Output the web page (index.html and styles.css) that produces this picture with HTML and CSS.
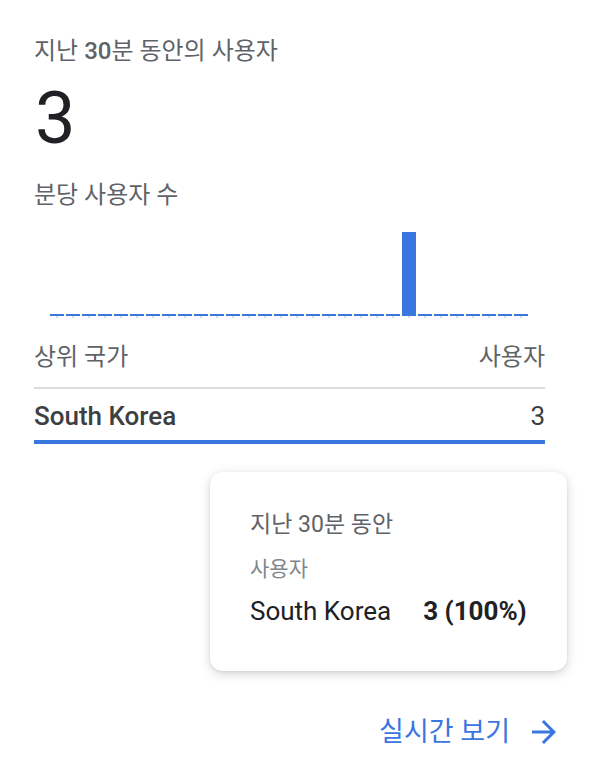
FILE: index.html
```html
<!DOCTYPE html>
<html lang="ko">
<head>
<meta charset="utf-8">
<link rel="stylesheet" href="styles.css">
</head>
<body>
<div class="card">
  <div class="title">지난 <span class="med">30</span>분 동안의 사용자</div>
  <div class="big">3</div>
  <div class="subtitle">분당 사용자 수</div>
  <div class="chart">
    <div class="bar"></div><div class="bar"></div><div class="bar"></div><div class="bar"></div><div class="bar"></div>
    <div class="bar"></div><div class="bar"></div><div class="bar"></div><div class="bar"></div><div class="bar"></div>
    <div class="bar"></div><div class="bar"></div><div class="bar"></div><div class="bar"></div><div class="bar"></div>
    <div class="bar"></div><div class="bar"></div><div class="bar"></div><div class="bar"></div><div class="bar"></div>
    <div class="bar"></div><div class="bar"></div><div class="bar tall"></div><div class="bar"></div><div class="bar"></div>
    <div class="bar"></div><div class="bar"></div><div class="bar"></div><div class="bar"></div><div class="bar"></div>
  </div>
  <div class="thead">
    <span>상위 국가</span>
    <span>사용자</span>
  </div>
  <div class="trow">
    <span>South Korea</span>
    <span class="num">3</span>
  </div>
  <div class="footer">
    <a class="link" href="#">실시간 보기
      <svg class="arrow" width="36" height="36" viewBox="0 0 24 24"><path d="M12 4l-1.41 1.41L16.17 11H4v2h12.17l-5.58 5.59L12 20l8-8z" fill="currentColor"/></svg>
    </a>
  </div>
  <div class="tooltip">
    <div class="tt-title">지난 30분 동안</div>
    <div class="tt-label">사용자</div>
    <div class="tt-row"><span>South Korea</span><span class="tt-val">3 (100%)</span></div>
  </div>
</div>
</body>
</html>
```

FILE: styles.css
```css
html, body {
  margin: 0;
  padding: 0;
  background: #ffffff;
}
body {
  font-family: Roboto, "Noto Sans CJK KR", sans-serif;
  width: 592px;
  height: 780px;
  overflow: hidden;
}
.card {
  position: relative;
  padding: 35px 47px 0 34px;
  height: 780px;
  box-sizing: border-box;
}
.title {
  font-size: 24px;
  line-height: 32px;
  color: #5f6368;
  font-weight: 400;
}
.title .med {
  font-weight: 500;
}
.big {
  font-size: 72px;
  line-height: 72px;
  color: #202124;
  margin-top: 16px;
  margin-left: 1px;
}
.subtitle {
  font-size: 24px;
  line-height: 32px;
  color: #5f6368;
  margin-top: 24px;
}
.chart {
  display: flex;
  align-items: flex-end;
  gap: 2px;
  height: 84px;
  margin-left: 16px;
  width: 478px;
  margin-top: 21px;
}
.bar {
  position: relative;
  width: 14px;
  height: 2px;
  background: #3a76e0;
  flex: none;
}
.bar::after {
  content: "";
  position: absolute;
  left: 6px;
  top: 100%;
  width: 2px;
  height: 2px;
  background: #dadce0;
}
.bar.tall {
  height: 84px;
}
.thead {
  display: flex;
  justify-content: space-between;
  font-size: 24px;
  line-height: 32px;
  color: #5f6368;
  margin-top: 25px;
  padding-bottom: 14px;
  border-bottom: 2px solid #dadce0;
}
.trow {
  display: flex;
  justify-content: space-between;
  font-size: 26px;
  line-height: 32px;
  color: #3c4043;
  font-weight: 500;
  padding-top: 11px;
  padding-bottom: 8px;
  border-bottom: 4px solid #3a76e0;
}
.trow .num {
  font-weight: 400;
}
.footer {
  display: flex;
  justify-content: flex-end;
  margin-top: 270px;
  margin-right: -17px;
}
.link {
  display: flex;
  align-items: center;
  gap: 16px;
  font-size: 27px;
  line-height: 36px;
  color: #3a76e0;
  text-decoration: none;
}
.arrow {
  width: 36px;
  height: 36px;
  flex: none;
}
.tooltip {
  position: absolute;
  left: 210px;
  top: 472px;
  width: 357px;
  height: 199px;
  box-sizing: border-box;
  padding: 37px 30px 0 40px;
  background: #ffffff;
  border-radius: 13px;
  box-shadow: 0 3px 12px rgba(0, 0, 0, 0.16), 0 1px 3px rgba(0, 0, 0, 0.08);
}
.tt-title {
  font-size: 23px;
  line-height: 32px;
  color: #5f6368;
}
.tt-label {
  font-size: 21px;
  line-height: 28px;
  color: #80868b;
  margin-top: 14px;
}
.tt-row {
  display: flex;
  gap: 32px;
  font-size: 26px;
  line-height: 32px;
  color: #202124;
  margin-top: 12px;
  white-space: nowrap;
}
.tt-val {
  font-weight: 700;
}
```
